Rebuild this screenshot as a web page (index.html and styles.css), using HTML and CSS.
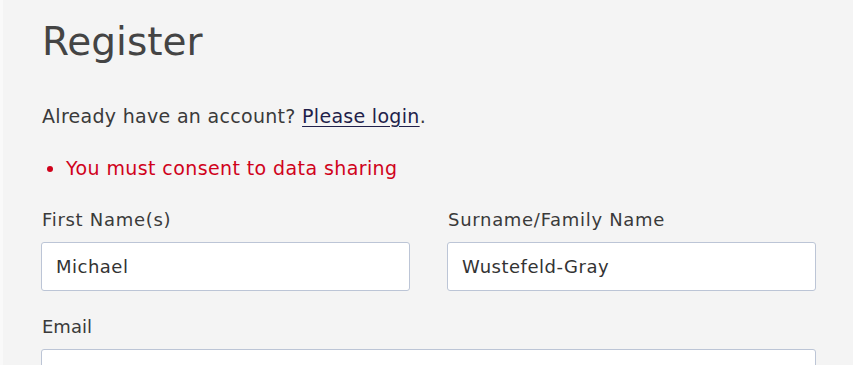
FILE: index.html
```html
<!DOCTYPE html>
<html>
<head>
<meta charset="utf-8">
<link rel="stylesheet" href="styles.css">
</head>
<body>
<div class="page">
  <main class="form">
    <h1 class="title">Register</h1>
    <p class="intro">Already have an account? <a href="#" class="link">Please login</a>.</p>
    <ul class="errors">
      <li>You must consent to data sharing</li>
    </ul>
    <div class="row">
      <div class="field">
        <label class="label">First Name(s)</label>
        <div class="input">Michael</div>
      </div>
      <div class="field">
        <label class="label">Surname/Family Name</label>
        <div class="input">Wustefeld-Gray</div>
      </div>
    </div>
    <div class="field">
      <label class="label label-email">Email</label>
      <div class="input"></div>
    </div>
  </main>
</div>
</body>
</html>
```
FILE: styles.css
```css
html, body {
  margin: 0;
  padding: 0;
  background: #f4f4f4;
  overflow: hidden;
}
.page {
  height: 365px;
  overflow: hidden;
  border-left: 3px solid #f9f9f9;
  padding: 0 37px 0 38px;
  font-family: "DejaVu Sans", "Open Sans", sans-serif;
  color: #3a3a3a;
}
.form {
  display: flex;
  flex-direction: column;
  width: 775px;
}
.title {
  margin: 14px 0 0 1px;
  font-size: 39px;
  font-weight: normal;
  line-height: 56px;
  color: #444;
}
.intro {
  margin: 34px 0 0 1px;
  font-size: 19px;
  line-height: 24px;
  letter-spacing: 0.3px;
}
.link {
  color: #1f1f4a;
  text-decoration: underline;
  text-underline-offset: 3px;
}
.errors {
  margin: 28px 0 0 0;
  padding-left: 25px;
  font-size: 19px;
  line-height: 24px;
  letter-spacing: 0.4px;
  color: #d0021b;
}
.row {
  display: grid;
  grid-template-columns: 1fr 1fr;
  gap: 37px;
  margin-top: 28px;
}
.field {
  display: flex;
  flex-direction: column;
}
.row + .field {
  margin-top: 24px;
}
.label {
  font-size: 18px;
  line-height: 24px;
  letter-spacing: 0.7px;
  margin: 0 0 10px 1px;
}
.label-email {
  letter-spacing: 0;
}
.input {
  box-sizing: border-box;
  height: 49px;
  background: #fff;
  border: 1px solid #bcc5d6;
  border-radius: 3px;
  padding: 0 14px;
  font-size: 18px;
  line-height: 47px;
  letter-spacing: 0.5px;
  color: #333;
}
```
